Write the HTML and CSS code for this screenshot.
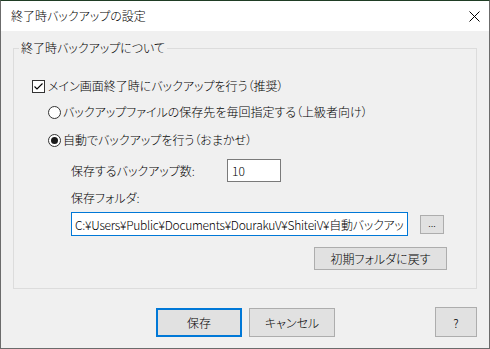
FILE: index.html
```html
<!DOCTYPE html>
<html lang="ja">
<head>
    <meta charset="UTF-8">
    <meta name="viewport" content="width=device-width, initial-scale=1.0">
    <title>終了時バックアップの設定</title>
    <link rel="stylesheet" href="styles.css">
</head>
<body>
    <div class="window">
        <div class="titlebar">
            <span class="title">終了時バックアップの設定</span>
            <svg class="close" width="11" height="11" viewBox="0 0 11 11">
                <path d="M0.5 0.5 L10.5 10.5 M10.5 0.5 L0.5 10.5" stroke="#000" stroke-width="1" fill="none"/>
            </svg>
        </div>

        <div class="client">
            <fieldset class="group">
                <legend>終了時バックアップについて</legend>

                <div class="option check-row">
                    <span class="checkbox">
                        <svg width="11" height="11" viewBox="0 0 11 11">
                            <path d="M1.5 5.5 L4 8 L9.5 2.5" stroke="#000" stroke-width="1.1" fill="none"/>
                        </svg>
                    </span>
                    <span>メイン画面終了時にバックアップを行う（推奨）</span>
                </div>

                <div class="option radio-row first">
                    <span class="radio"></span>
                    <span>バックアップファイルの保存先を毎回指定する（上級者向け）</span>
                </div>

                <div class="option radio-row second">
                    <span class="radio on"></span>
                    <span>自動でバックアップを行う（おまかせ）</span>
                </div>

                <div class="count-row">
                    <span class="count-label">保存するバックアップ数:</span>
                    <input type="text" class="edit count" value="10">
                </div>

                <div class="folder-label">保存フォルダ:</div>

                <div class="folder-row">
                    <input type="text" class="edit folder" value="C:¥Users¥Public¥Documents¥DourakuV¥ShiteiV¥自動バックアップ">
                    <button class="btn browse">...</button>
                </div>

                <div class="reset-row">
                    <button class="btn reset">初期フォルダに戻す</button>
                </div>
            </fieldset>

            <div class="buttons">
                <button class="btn ok">保存</button>
                <button class="btn cancel">キャンセル</button>
                <button class="btn help">?</button>
            </div>
        </div>
    </div>
</body>
</html>
```

FILE: styles.css
```css
* {
    box-sizing: border-box;
}

body {
    margin: 0;
    padding: 0;
    background-color: #f0f0f0;
    font-family: "Noto Sans CJK JP", "Noto Sans", sans-serif;
    font-size: 12px;
    font-weight: 300;
    color: #000;
    font-feature-settings: "palt";
}

.window {
    width: 490px;
    height: 349px;
    border: 1px solid #6b6b6b;
    border-top-color: #1f3d24;
    background-color: #f0f0f0;
    display: flex;
    flex-direction: column;
}

.titlebar {
    height: 30px;
    background: #fff;
    display: flex;
    align-items: center;
    padding: 0 9px 0 10px;
}

.title {
    flex: 1;
    line-height: 14px;
}

.close {
    display: block;
    margin-top: 1px;
}

.client {
    flex: 1;
    padding: 10px 12px 0 12px;
}

.group {
    margin: 0;
    padding: 0 0 18px 0;
    border: 1px solid #dcdcdc;
    min-width: 0;
}

.group legend {
    margin-left: 5px;
    padding: 0 2px;
    line-height: 14px;
    height: 14px;
}

.option {
    display: flex;
    align-items: center;
    height: 20px;
    line-height: 14px;
    gap: 3px;
}

.check-row {
    margin: 21px 0 0 18px;
}

.radio-row {
    margin-left: 34px;
    gap: 2px;
}

.radio-row.first {
    margin-top: 6px;
}

.radio-row.second {
    margin-top: 8px;
}

.checkbox {
    width: 13px;
    height: 13px;
    border: 1px solid #333;
    background: #fff;
    display: flex;
    flex-shrink: 0;
}

.radio {
    width: 13px;
    height: 13px;
    border: 1px solid #333;
    border-radius: 50%;
    background: #fff;
    display: flex;
    align-items: center;
    justify-content: center;
    flex-shrink: 0;
}

.radio.on::after {
    content: "";
    width: 7px;
    height: 7px;
    border-radius: 50%;
    background: #1a1a1a;
}

.count-row {
    display: flex;
    align-items: center;
    margin: 9px 0 0 57px;
    height: 23px;
}

.count-label {
    width: 156px;
}

.edit {
    font-family: inherit;
    font-size: 12px;
    font-weight: 300;
    font-feature-settings: "palt";
    color: #000;
    background: #fff;
    border: 1px solid #7a7a7a;
    padding: 0 3px;
    margin: 0;
    outline: none;
}

.edit.count {
    width: 54px;
    height: 23px;
    padding-left: 4px;
}

.folder-label {
    margin: 8px 0 0 57px;
    height: 16px;
    line-height: 16px;
}

.folder-row {
    display: flex;
    align-items: center;
    margin: 6px 0 0 57px;
    height: 24px;
}

.edit.folder {
    width: 337px;
    height: 24px;
    border-color: #0078d7;
    letter-spacing: -0.25px;
}

.btn {
    font-family: inherit;
    font-size: 12px;
    font-weight: 300;
    font-feature-settings: "palt";
    color: #000;
    background: #e1e1e1;
    border: 1px solid #adadad;
    padding: 0;
    margin: 0;
    cursor: default;
}

.browse {
    width: 24px;
    height: 19px;
    margin-left: 12px;
    font-size: 10px;
    line-height: 10px;
    padding-bottom: 2px;
}

.reset-row {
    margin: 11px 0 0 300px;
    height: 23px;
}

.reset {
    width: 133px;
    height: 23px;
}

.buttons {
    display: flex;
    align-items: flex-end;
    margin-top: 18px;
    height: 30px;
}

.ok, .cancel {
    width: 86px;
    height: 29px;
}

.ok {
    margin-left: 143px;
    border: 2px solid #0078d7;
}

.cancel {
    margin-left: 7px;
}

.help {
    width: 42px;
    height: 30px;
    margin-left: auto;
}
```
